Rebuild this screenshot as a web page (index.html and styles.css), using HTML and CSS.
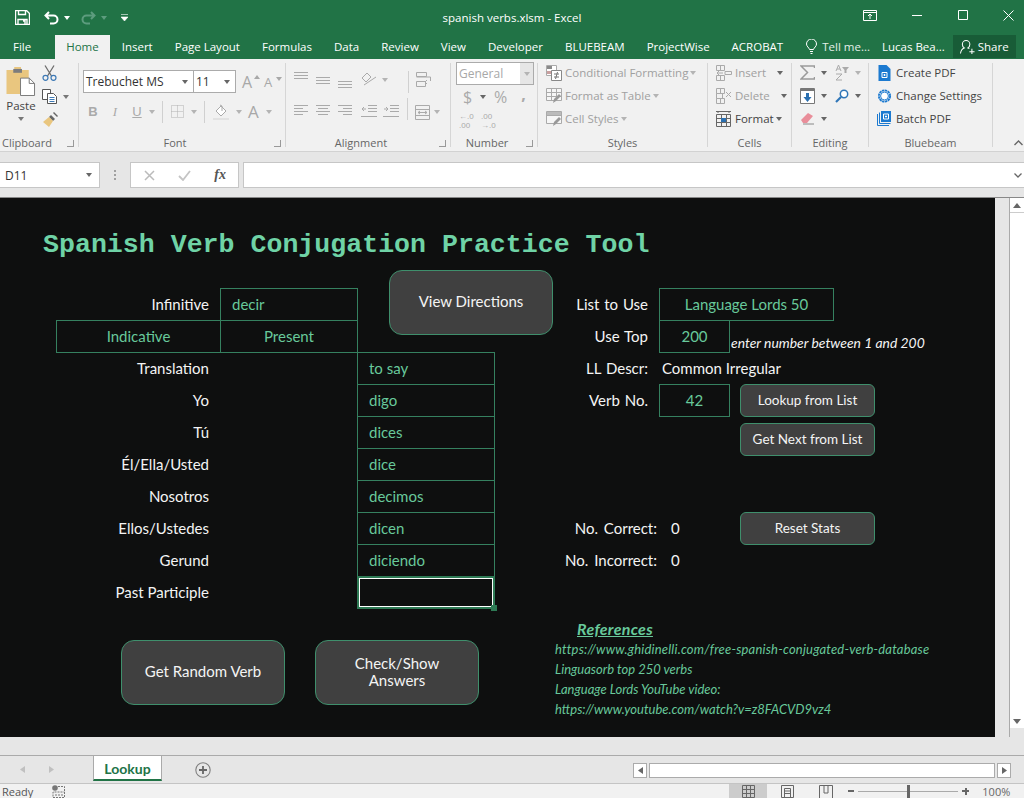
FILE: index.html
```html
<!DOCTYPE html>
<html>
<head>
<meta charset="utf-8">
<title>spanish verbs.xlsm - Excel</title>
<link rel="stylesheet" href="styles.css">
</head>
<body>

<!-- title bar -->
<div class="titlebar">
  <div class="qat">
    <svg class="q-save" width="15" height="15" viewBox="0 0 15 15"><path d="M.5.500h11l3 3v11H.500z M3.500.5v4h7v-4 M3 14.500v-5h9v5 M8 11h2v3" fill="none" stroke="#fff" stroke-width="1.400"/></svg>
    <svg class="q-undo" width="15" height="14" viewBox="0 0 15 14"><path d="M5 1L1.500 4.500 5 8 M2 4.500h7.500a4 4 0 0 1 0 8H6" fill="none" stroke="#fff" stroke-width="2"/></svg>
    <span class="caret white"></span>
    <svg class="q-redo" width="15" height="14" viewBox="0 0 15 14"><path d="M10 1l3.500 3.500L10 8 M13 4.500H5.500a4 4 0 0 0 0 8H9" fill="none" stroke="#5d9c7e" stroke-width="2"/></svg>
    <span class="caret dim"></span>
    <svg class="q-more" width="7" height="8" viewBox="0 0 7 8"><path d="M0 .5h7M0 3h7l-3.500 4z" fill="#fff" stroke="#fff" stroke-width=".6"/></svg>
  </div>
  <div class="doc-title">spanish verbs.xlsm - Excel</div>
  <div class="winbtns">
    <svg width="14" height="11" viewBox="0 0 14 11"><path d="M.5.500h13v10H.500z M.5 2.500h13 M7 9V4 M5 6l2-2 2 2" fill="none" stroke="#fff"/></svg>
    <svg class="w-min" width="10" height="1" viewBox="0 0 10 1"><path d="M0 .5h10" stroke="#fff"/></svg>
    <svg class="w-max" width="10" height="10" viewBox="0 0 10 10"><path d="M.5.500h9v9h-9z" fill="none" stroke="#fff"/></svg>
    <svg class="w-close" width="11" height="11" viewBox="0 0 11 11"><path d="M.5.500l10 10M10.500.500l-10 10" stroke="#fff"/></svg>
  </div>
</div>

<!-- ribbon tabs -->
<div class="tabs">
  <span class="tab tab-file">File</span>
  <span class="tab tab-on">Home</span>
  <span class="tab">Insert</span>
  <span class="tab">Page Layout</span>
  <span class="tab">Formulas</span>
  <span class="tab">Data</span>
  <span class="tab">Review</span>
  <span class="tab">View</span>
  <span class="tab">Developer</span>
  <span class="tab">BLUEBEAM</span>
  <span class="tab">ProjectWise</span>
  <span class="tab">ACROBAT</span>
  <svg class="bulb" width="11" height="15" viewBox="0 0 11 15"><path d="M3.500 10.500C3 8.500.5 7.500.5 5a5 5 0 0 1 10 0c0 2.500-2.500 3.500-3 5.500z M4 12.500h3 M4.500 14.500h2" fill="none" stroke="#fff"/></svg>
  <span class="tab tab-tell">Tell me...</span>
  <span class="tab tab-user">Lucas Bea...</span>
  <span class="share">
    <svg width="15" height="15" viewBox="0 0 16 16"><path d="M.5 15.500c.5-4 2.500-5.500 4-6-1.500-1-2-2.500-2-4a4 4 0 0 1 8 0c0 1.500-.5 3-2 4 .5.200 1 .4 1.500.8 M10 13.500h5.500 M12.700 10.500v5.500" fill="none" stroke="#fff" stroke-width="1.100"/></svg>
    Share
  </span>
</div>

<!-- ribbon -->
<div class="ribbon">
  <div class="group g-clip">
    <div class="body clip-body">
      <div class="paste">
        <svg width="30" height="29" viewBox="0 0 30 30"><path d="M0 3h8V0h7v3h8v25H0z" fill="#e9c67f"/><path d="M7 2h9v4H7z" fill="#7c7c7c"/><path d="M14.500 11.500h9l5.500 5.500v12.500H14.500z" fill="#fff" stroke="#777"/><path d="M23.500 11.500v5.500H29" fill="none" stroke="#777"/></svg>
        <span class="paste-txt">Paste</span>
        <span class="caret"></span>
      </div>
      <div class="clip-tools">
        <svg width="15" height="16" viewBox="0 0 15 16"><path d="M3 .5l6.500 10.500M12 .5L5.500 11" stroke="#6d6d6d" stroke-width="1.300" fill="none"/><circle cx="3.500" cy="12.800" r="2.500" fill="none" stroke="#3d79b5" stroke-width="1.200"/><circle cx="11.500" cy="12.800" r="2.500" fill="none" stroke="#3d79b5" stroke-width="1.200"/></svg>
        <span class="tool-line"><svg width="16" height="15" viewBox="0 0 16 15"><path d="M.5.500h8v10h-8z" fill="#fff" stroke="#555"/><path d="M5.500 4.500h6l3 3v7h-9z" fill="#fff" stroke="#555"/><path d="M7.500 8.500h5M7.500 10.500h5M7.500 12.500h5" stroke="#3d79b5"/></svg><span class="caret"></span></span>
        <svg width="16" height="15" viewBox="0 0 16 15"><path d="M9 3l4 4-2 2-4-4z" fill="#666"/><path d="M11 1l1-1 4 4-1 1z" fill="#666"/><path d="M7 5l4 4-4 6-6-5z" fill="#e9c67f"/></svg>
      </div>
    </div>
    <div class="name">Clipboard<i class="launcher"></i></div>
  </div>

  <div class="group g-font">
    <div class="body font-body">
      <div class="font-row1">
        <span class="combo combo-font">Trebuchet MS<span class="caret dark"></span></span>
        <span class="combo combo-size">11<span class="caret dark"></span></span>
        <span class="grow-a">A<i class="up"></i></span>
        <span class="grow-a small-a">A<i class="down"></i></span>
      </div>
      <div class="font-row2">
        <b class="fmt f-b">B</b><i class="fmt f-i">I</i><u class="fmt f-u">U</u><span class="caret dis"></span>
        <span class="vsep"></span>
        <svg width="13" height="13" viewBox="0 0 13 13"><path d="M.5.500h12v12H.500z M6.500.5v12 M.5 6.500h12" fill="none" stroke="#b0b0b0" stroke-dasharray="1 1"/></svg><span class="caret dis"></span>
        <span class="vsep"></span>
        <svg width="16" height="16" viewBox="0 0 16 16"><path d="M3 7l5-5 5 5-5 5z" fill="#fff" stroke="#aaa"/><path d="M7 1l2 1 0 5" fill="none" stroke="#aaa"/><path d="M0 14h16v2H0z" fill="#e2e2e2"/></svg><span class="caret dis"></span>
        <span class="color-a">A</span><span class="caret dis"></span>
      </div>
    </div>
    <div class="name pad-launch">Font<i class="launcher"></i></div>
  </div>

  <div class="group g-align">
    <div class="body align-body">
      <div class="align-row">
        <svg width="14" height="8" viewBox="0 0 14 8"><path d="M0 .5h14M0 3.500h14M0 6.500h14" stroke="#aaa"/></svg>
        <svg class="a-mid" width="14" height="8" viewBox="0 0 14 8"><path d="M0 .5h14M0 3.500h14M0 6.500h14" stroke="#aaa"/></svg>
        <svg class="a-bot" width="14" height="8" viewBox="0 0 14 8"><path d="M0 .5h14M0 3.500h14M0 6.500h14" stroke="#aaa"/></svg>
        <svg class="a-ori" width="16" height="14" viewBox="0 0 16 14"><path d="M1 6l5-5 4 4-5 5z M3 13l12-8" fill="none" stroke="#aaa"/></svg><span class="caret dis"></span>
        <span class="vsep vsep-a"></span>
        <svg width="16" height="15" viewBox="0 0 16 15"><path d="M.5.500h10v4H.500z M.5 9.500h9v5h-9z M.5 5h14v4" fill="none" stroke="#aaa"/><path d="M11 12l-2-2 2-2" fill="none" stroke="#aaa"/></svg>
      </div>
      <div class="align-row align-row2">
        <svg width="14" height="10" viewBox="0 0 14 10"><path d="M0 .5h14M0 3.500h9M0 6.500h14M0 9.500h9" stroke="#aaa"/></svg>
        <svg class="a-mid2" width="14" height="10" viewBox="0 0 14 10"><path d="M0 .5h14M2 3.500h10M0 6.500h14M2 9.500h10" stroke="#aaa"/></svg>
        <svg class="a-mid2" width="14" height="10" viewBox="0 0 14 10"><path d="M0 .5h14M5 3.500h9M0 6.500h14M5 9.500h9" stroke="#aaa"/></svg>
        <svg class="a-ind" width="16" height="12" viewBox="0 0 16 12"><path d="M7 .5h9M7 3.500h9M7 6.500h9M0 11.500h16M5 4H1M3 2L1 4l2 2" fill="none" stroke="#aaa"/></svg>
        <svg class="a-ind2" width="16" height="12" viewBox="0 0 16 12"><path d="M7 .5h9M7 3.500h9M7 6.500h9M0 11.500h16M1 4h4M3 2l2 2-2 2" fill="none" stroke="#aaa"/></svg>
        <span class="vsep vsep-b"></span>
        <svg width="15" height="15" viewBox="0 0 15 15"><path d="M.5.500h14v14H.500z M.5 4.500h14 M.5 10.500h14 M3 7.500h9M5 6L3 7.500 5 9M10 6l2 1.500L10 9" fill="none" stroke="#aaa"/></svg><span class="caret dis"></span>
      </div>
    </div>
    <div class="name pad-launch">Alignment<i class="launcher"></i></div>
  </div>

  <div class="group g-num">
    <div class="body num-body">
      <span class="combo combo-num">General<span class="combo-btn"><span class="caret dis"></span></span></span>
      <div class="num-row">
        <span class="n-dollar">$</span><span class="caret dark"></span><span class="n-pct">%</span><span class="n-comma">,</span>
      </div>
      <div class="num-row3">
        <span class="dec">&#8592;.0<br>.00</span><span class="dec">.00<br>&#8594;.0</span>
      </div>
    </div>
    <div class="name pad-launch">Number<i class="launcher"></i></div>
  </div>

  <div class="group g-styles">
    <div class="body list-body">
      <div class="item dis-txt">
        <svg width="16" height="16" viewBox="0 0 16 16"><path d="M.5.500h10v10H.500z" fill="#fff" stroke="#aaa"/><path d="M1 1h5v3H1z" fill="#8a8a8a"/><path d="M1 6h5v3H1z" fill="#c9a0a0"/><path d="M5.500 5.500h10v10h-10z" fill="#fff" stroke="#888"/><path d="M8 9h5M8 12h5M11.500 7l-2 7" stroke="#777" fill="none"/></svg>
        Conditional Formatting<span class="caret dis"></span>
      </div>
      <div class="item dis-txt">
        <svg width="16" height="16" viewBox="0 0 16 16"><path d="M.5.500h15v12H.500z M5.500.5v12 M10.500.5v12 M.5 4.500h15 M.5 8.500h15" fill="#f6f6f6" stroke="#aaa"/><path d="M7 15l1-4 5-5 2 2-5 5z" fill="#999"/></svg>
        Format as Table<span class="caret dis"></span>
      </div>
      <div class="item dis-txt">
        <svg width="16" height="16" viewBox="0 0 16 16"><path d="M.5.500h15v12H.500z M.5 4.500h15" fill="#f6f6f6" stroke="#aaa"/><path d="M1 1h14v3H1z" fill="#bbb"/><path d="M7 15l1-4 5-5 2 2-5 5z" fill="#999"/></svg>
        Cell Styles<span class="caret dis"></span>
      </div>
    </div>
    <div class="name">Styles</div>
  </div>

  <div class="group g-cells">
    <div class="body list-body">
      <div class="item dis-txt">
        <svg width="16" height="16" viewBox="0 0 16 16"><path d="M.5 10.500h8v5h-8z M4.500 10.500v5 M.5.500h8v5h-8z M4.500.5v5 M9 6.500h6.500v3H9z M1 8h6M3 6l-2 2 2 2" fill="none" stroke="#aaa"/></svg>
        Insert<span class="caret dark far"></span>
      </div>
      <div class="item dis-txt">
        <svg width="16" height="16" viewBox="0 0 16 16"><path d="M.5 10.500h8v5h-8z M4.500 10.500v5 M.5.500h8v5h-8z M4.500.5v5 M.5 5.500h6v5h-6z M10 4l5 5M15 4l-5 5" fill="none" stroke="#aaa"/></svg>
        Delete<span class="caret dark far"></span>
      </div>
      <div class="item">
        <svg width="16" height="16" viewBox="0 0 16 16"><path d="M.5 3.500h14v12H.500z M.5 7.500h14 M.5 11.500h14 M5.500 3.500v12 M10.500 3.500v12 M0 .5h15 M2 0v2 M13 0v2" fill="none" stroke="#666"/><path d="M5 7h5v4H5z" fill="#2a6fb0"/></svg>
        Format<span class="caret dark"></span>
      </div>
    </div>
    <div class="name">Cells</div>
  </div>

  <div class="group g-edit">
    <div class="body edit-body">
      <div class="edit-row">
        <svg width="15" height="15" viewBox="0 0 15 15"><path d="M14.500 3V1H1l6.500 6.500L1 14h13.500v-2" fill="none" stroke="#9a9a9a" stroke-width="1.500"/></svg><span class="caret dark"></span>
        <svg class="e-2" width="14" height="16" viewBox="0 0 14 16"><path d="M7 15H1l6-6H1M1 6l2.500-6L6 6M2 4h3" fill="none" stroke="#aaa"/><path d="M7 2h7l-2.500 3v3h-2V5z" fill="#aaa"/></svg><span class="caret dis"></span>
      </div>
      <div class="edit-row">
        <svg width="15" height="16" viewBox="0 0 15 16"><path d="M.5.500h14v15H.500z" fill="#fff" stroke="#777"/><path d="M1 1h13v2H1z" fill="#777"/><path d="M6 5h3v4h2.500l-4 5-4-5H6z" fill="#2a6fb0"/></svg><span class="caret dark"></span>
        <svg class="e-2" width="14" height="14" viewBox="0 0 14 14"><circle cx="9" cy="5" r="3.700" fill="#fff" stroke="#2f76b8" stroke-width="1.500"/><path d="M1 13l5-5" stroke="#2f76b8" stroke-width="2.200"/></svg><span class="caret dark"></span>
      </div>
      <div class="edit-row">
        <svg width="15" height="14" viewBox="0 0 15 14"><path d="M1 8l7-7 5 3-6 7H3z" fill="#e98e9a"/><path d="M3 12h11" stroke="#888"/></svg><span class="caret dark"></span>
      </div>
    </div>
    <div class="name">Editing</div>
  </div>

  <div class="group g-bb">
    <div class="body list-body">
      <div class="item bb">
        <svg width="15" height="16" viewBox="0 0 14 16"><path d="M1 0h8l4 4v12H1z" fill="#1c7ad0"/><path d="M4.500 7.500h5v5h-5z M6.500 9.500h1v1h-1z" fill="none" stroke="#fff"/></svg>
        Create PDF
      </div>
      <div class="item bb">
        <svg width="15" height="16" viewBox="0 0 16 16"><circle cx="8" cy="8" r="6" fill="none" stroke="#1c7ad0" stroke-width="2" stroke-dasharray="2.500 .6"/><circle cx="8" cy="8" r="4.200" fill="#fff" stroke="#1c7ad0"/></svg>
        Change Settings
      </div>
      <div class="item bb">
        <svg width="15" height="15" viewBox="0 0 15 15"><path d="M.5 3v11.500H12M2.500 1.500v11h11" fill="none" stroke="#1c7ad0"/><path d="M4 0h10v11H4z" fill="#1c7ad0"/><path d="M6.500 3h5v5h-5z M8.500 5h1v1h-1z" fill="none" stroke="#fff"/></svg>
        Batch PDF
      </div>
    </div>
    <div class="name">Bluebeam</div>
  </div>

  <svg class="collapse" width="9" height="6" viewBox="0 0 9 6"><path d="M.5 5l4-4 4 4" fill="none" stroke="#666" stroke-width="1.400"/></svg>
</div>

<!-- formula bar -->
<div class="strip-a"></div>
<div class="formula">
  <div class="namebox">D11<span class="caret dark"></span></div>
  <div class="dots"><span></span></div>
  <div class="fx-box">
    <svg width="11" height="11" viewBox="0 0 11 11"><path d="M1 1l9 9M10 1l-9 9" stroke="#bbb" stroke-width="1.500"/></svg>
    <svg width="13" height="11" viewBox="0 0 13 11"><path d="M1 6l4 4 7-9" fill="none" stroke="#c4c4c4" stroke-width="1.800"/></svg>
    <i class="fx">fx</i>
  </div>
  <div class="input-box">
    <svg width="8" height="5" viewBox="0 0 8 5"><path d="M.5.500L4 4 7.500.5" fill="none" stroke="#666" stroke-width="1.300"/></svg>
  </div>
</div>
<div class="strip-b"></div>

<!-- worksheet -->
<div class="work">
  <div class="sheet">
    <h1 class="sheet-title">Spanish Verb Conjugation Practice Tool</h1>

    <div class="lbl r2 c2">Infinitive</div>
    <div class="box r2 c3 left">decir</div>
    <div class="lblr r2 c5">List to Use</div>
    <div class="box r2 c6-7 mid">Language Lords 50</div>

    <div class="box r3 c2 mid">Indicative</div>
    <div class="box r3 c3 mid">Present</div>
    <div class="lblr r3 c5">Use Top</div>
    <div class="box r3 c6 mid">200</div>
    <div class="note r3 c7-8">enter number between 1 and 200</div>

    <div class="lbl r4 c2">Translation</div>
    <div class="box r4 c4 left">to say</div>
    <div class="lblr r4 c5">LL Descr:</div>
    <div class="plain r4 c6-8">Common Irregular</div>

    <div class="lbl r5 c2">Yo</div>
    <div class="box r5 c4 left">digo</div>
    <div class="lblr r5 c5">Verb No.</div>
    <div class="box r5 c6 mid">42</div>

    <div class="lbl r6 c2">Tú</div>
    <div class="box r6 c4 left">dices</div>

    <div class="lbl r7 c2">Él/Ella/Usted</div>
    <div class="box r7 c4 left">dice</div>

    <div class="lbl r8 c2">Nosotros</div>
    <div class="box r8 c4 left">decimos</div>

    <div class="lbl r9 c2">Ellos/Ustedes</div>
    <div class="box r9 c4 left">dicen</div>
    <div class="lblc r9 c5">No. Correct:</div>
    <div class="val r9 c6">0</div>

    <div class="lbl r10 c2">Gerund</div>
    <div class="box r10 c4 left">diciendo</div>
    <div class="lblc r10 c5">No. Incorrect:</div>
    <div class="val r10 c6">0</div>

    <div class="lbl r11 c2">Past Participle</div>
    <div class="active r11 c4"><span class="handle"></span></div>

    <div class="big-btns">
      <div class="btn btn-big">Get Random Verb</div>
      <div class="btn btn-big">Check/Show<br>Answers</div>
    </div>

    <div class="refs">
      <div class="refs-head">References</div>
      <div class="ref-long">https://www.ghidinelli.com/free-spanish-conjugated-verb-database</div>
      <div>Linguasorb top 250 verbs</div>
      <div>Language Lords YouTube video:</div>
      <div>https://www.youtube.com/watch?v=z8FACVD9vz4</div>
    </div>

    <!-- floating shapes -->
    <div class="btn shape-view">View Directions</div>
    <div class="btn btn-small shape-lookup">Lookup from List</div>
    <div class="btn btn-small shape-next">Get Next from List</div>
    <div class="btn btn-small shape-reset">Reset Stats</div>
  </div>
  <div class="vgap"></div>
  <div class="vscroll">
    <span class="v-up"><svg width="8" height="5" viewBox="0 0 8 5"><path d="M0 5l4-5 4 5z" fill="#666"/></svg></span>
    <span class="v-thumb"></span>
    <span class="v-down"><svg width="8" height="5" viewBox="0 0 8 5"><path d="M0 0l4 5 4-5z" fill="#666"/></svg></span>
  </div>
</div>
<div class="strip-c"></div>

<!-- sheet tabs -->
<div class="sheetbar">
  <svg class="nav-l" width="5" height="7" viewBox="0 0 5 7"><path d="M5 0L0 3.500 5 7z" fill="#c0c0c0"/></svg>
  <svg class="nav-r" width="5" height="7" viewBox="0 0 5 7"><path d="M0 0l5 3.500L0 7z" fill="#c0c0c0"/></svg>
  <div class="sheet-tab">Lookup</div>
  <svg class="add" width="16" height="16" viewBox="0 0 16 16"><circle cx="8" cy="8" r="7.200" fill="none" stroke="#808080" stroke-width="1.100"/><path d="M8 4v8M4 8h8" stroke="#666" stroke-width="1.800"/></svg>
  <div class="hscroll">
    <span class="h-btn"><svg width="5" height="7" viewBox="0 0 5 7"><path d="M5 0L0 3.500 5 7z" fill="#666"/></svg></span>
    <span class="h-thumb"></span>
    <span class="h-btn"><svg width="5" height="7" viewBox="0 0 5 7"><path d="M0 0l5 3.500L0 7z" fill="#666"/></svg></span>
  </div>
</div>

<!-- status bar -->
<div class="status">
  <span class="ready">Ready</span>
  <svg class="macro" width="13" height="13" viewBox="0 0 13 13"><circle cx="3" cy="3" r="2.800" fill="#777"/><path d="M6 1.500h6.500v11H1V7h11.500 M3 10h8" fill="none" stroke="#777" stroke-dasharray="2 1"/></svg>
  <span class="view-btn view-on"><svg width="13" height="13" viewBox="0 0 13 13"><path d="M.5.500h12v12H.500z M4.500.5v12 M8.500.5v12 M.5 4.500h12 M.5 8.500h12" fill="none" stroke="#666"/></svg></span>
  <span class="view-btn"><svg width="13" height="13" viewBox="0 0 13 13"><path d="M.5.500h12v12H.500z M3.500 3.500h6v10h-6z M3.500 6h6 M3.500 8.500h6" fill="none" stroke="#666"/></svg></span>
  <span class="view-btn"><svg width="14" height="13" viewBox="0 0 14 13"><path d="M.5 13V.5h13V13 M5 0v8h4V0" fill="none" stroke="#666"/></svg></span>
  <div class="zoom">
    <span class="z-minus"></span>
    <span class="z-track"><span class="z-thumb"></span></span>
    <span class="z-plus"></span>
    <span class="z-pct">100%</span>
  </div>
</div>

</body>
</html>
```

FILE: styles.css
```css
* { box-sizing: border-box; }
html, body { margin: 0; height: 798px; overflow: hidden; }
body { width: 1024px; font-family: "Open Sans", "Noto Sans", sans-serif; font-size: 12px; color: #444; background: #e6e6e6; }

.caret { display: inline-block; width: 0; height: 0; border-left: 3.5px solid transparent; border-right: 3.5px solid transparent; border-top: 4px solid #777; }
.caret.white { border-top-color: #fff; }
.caret.dim { border-top-color: #5d9c7e; }
.caret.dark { border-top-color: #666; }
.caret.dis { border-top-color: #b4b4b4; }

/* title bar */
.titlebar { height: 35px; background: #217346; display: grid; grid-template-columns: 1fr auto 1fr; align-items: center; color: #fff; }
.qat { display: flex; align-items: center; padding-left: 15px; }
.q-undo { margin-left: 14px; }
.qat .caret { margin-left: 5px; }
.q-redo { margin-left: 11px; }
.q-more { margin-left: 14px; }
.doc-title { font-size: 11.5px; }
.winbtns { display: flex; align-items: center; justify-content: flex-end; padding-right: 10px; padding-bottom: 5px; }
.w-min { margin-left: 35px; }
.w-max { margin-left: 36px; }
.w-close { margin-left: 35px; }

/* tabs */
.tabs { height: 24px; background: #217346; display: flex; align-items: stretch; color: #fff; position: relative; }
.tab { padding-top: 4px; margin-left: 22px; white-space: nowrap; font-size: 11.5px; }
.tab-file { margin-left: 13px; margin-right: 2px; }
.tab-on { background: #f1f1f1; color: #217346; margin-left: 22px; margin-right: -10px; padding: 4px 11px 0; }
.bulb { margin: 4px 0 0 23px; }
.tab-tell { margin-left: 5px; color: #e4efe9; }
.tab-user { margin-left: 12px; }
.share { margin-left: 8px; width: 63px; height: 23px; background: #185c37; display: flex; align-items: center; gap: 3px; padding-left: 7px; font-size: 11.5px; }

/* ribbon */
.ribbon { height: 93px; background: #f1f1f1; display: flex; position: relative; padding-top: 4px; border-bottom: 1px solid #d2d2d2; }
.group { height: 84px; display: flex; flex-direction: column; border-right: 1px solid #d6d6d6; position: relative; }
.g-clip { width: 79px; }
.g-font { width: 207px; }
.g-align { width: 165px; }
.g-num { width: 87px; }
.g-styles { width: 170px; }
.g-cells { width: 84px; }
.g-edit { width: 77px; }
.g-bb { width: 124px; }
.body { flex: none; height: 73px; display: flex; }
.name { height: 14px; text-align: center; font-size: 11px; line-height: 14px; color: #666; position: relative; }
.pad-launch { padding-right: 14px; }
.g-clip .name { text-align: left; padding-left: 2px; }
.launcher { position: absolute; right: 4px; top: 4px; width: 7px; height: 7px; border-left: 1px solid #999; border-top: 1px solid #999; transform: rotate(180deg); }
.collapse { position: absolute; top: 81px; right: 1px; }

.clip-body { padding: 3px 0 0 6px; }
.paste { width: 30px; display: flex; flex-direction: column; align-items: center; font-size: 11.5px; color: #444; }
.paste svg { margin-top: 1px; }
.paste-txt { margin-top: 2px; line-height: 15px; }
.paste .caret { margin-top: 4px; }
.clip-tools { display: flex; flex-direction: column; gap: 8px; margin: -1px 0 0 6px; }
.tool-line { display: flex; align-items: center; gap: 5px; }

.font-body { flex-direction: column; padding: 7px 0 0 4px; }
.font-row1 { display: flex; align-items: center; height: 23px; }
.combo { background: #fff; border: 1px solid #ababab; display: flex; align-items: center; justify-content: space-between; color: #333; font-size: 12px; font-family: "Open Sans", sans-serif; padding: 0 5px 0 2px; height: 23px; }
.combo-font { width: 111px; }
.combo-size { width: 43px; margin-left: -1px; }
.grow-a { margin-left: 6px; color: #a8a8a8; font-size: 16px; position: relative; width: 13px; }
.small-a { margin-left: 9px; font-size: 13px; }
.grow-a i { position: absolute; right: -5px; top: 4px; width: 0; height: 0; border-left: 3px solid transparent; border-right: 3px solid transparent; }
.grow-a .up { border-bottom: 4px solid #a8a8a8; }
.grow-a .down { border-top: 4px solid #a8a8a8; }
.font-row2 { display: flex; align-items: center; height: 23px; margin-top: 7px; padding-left: 5px; color: #aaa; }
.fmt { font-family: "Liberation Sans", sans-serif; font-size: 13px; width: 10px; text-align: center; }
.f-i { margin-left: 12px; font-family: "Liberation Serif", serif; }
.f-u { margin-left: 12px; }
.font-row2 .caret { margin-left: 7px; }
.vsep { width: 1px; height: 22px; background: #d0d0d0; margin: 0 8px 0 7px; }
.color-a { margin-left: 6px; font-size: 17px; color: #a8a8a8; }

.align-body { flex-direction: column; padding: 9px 0 0 8px; }
.align-row { display: flex; align-items: flex-start; height: 22px; }
.a-mid { margin: 5px 0 0 8px; }
.a-bot { margin: 9px 0 0 8px; }
.a-ori { margin: 0 0 0 9px; }
.align-row .caret { margin: 6px 0 0 5px; }
.vsep-a { margin: -1px 7px 0 20px; }
.align-row2 { margin-top: 9px; }
.a-mid2 { margin-left: 8px; }
.a-ind { margin-left: 9px; }
.a-ind2 { margin-left: 6px; }
.vsep-b { margin: -5px 7px 0 8px; }
.align-row2 > svg { margin-top: 2px; }
.align-row2 .caret { margin: 7px 0 0 4px; }

.num-body { flex-direction: column; padding: 0 0 0 5px; margin: -1px 0 1px; }
.combo-num { width: 78px; height: 23px; flex: none; color: #a8a8a8; padding: 0 0 0 2px; font-size: 12px; }
.combo-btn { width: 13px; height: 21px; background: #e6e6e6; display: flex; align-items: center; justify-content: center; }
.num-row { display: flex; align-items: center; height: 24px; color: #aaa; padding-left: 7px; }
.n-dollar { font-size: 16px; width: 10px; }
.num-row .caret { margin-left: 7px; }
.n-pct { font-size: 16px; margin-left: 8px; }
.n-comma { font-size: 16px; margin-left: 14px; font-weight: 700; margin-top: -6px; }
.num-row3 { display: flex; gap: 8px; padding-left: 3px; margin-top: 3px; }
.dec { font-family: "Liberation Sans", sans-serif; font-size: 8px; line-height: 9px; color: #aaa; width: 14px; }

.list-body { flex-direction: column; margin: -2px 0 2px; }
.item { height: 23px; display: flex; align-items: center; white-space: nowrap; padding-left: 8px; gap: 3px; font-size: 11.500px; color: #444; }
.item .caret { margin-left: -1px; }
.item .far { margin-left: 8px; }
.dis-txt { color: #a0a0a0; }
.bb { gap: 4px; }

.edit-body { flex-direction: column; padding-left: 8px; margin: -2px 0 2px; }
.edit-row { height: 23px; display: flex; align-items: center; }
.edit-row .caret { margin-left: 6px; }
.e-2 { margin-left: 8px; }

/* formula bar */
.strip-a { height: 10px; background: #e6e6e6; }
.formula { height: 26px; background: #e6e6e6; display: flex; }
.namebox { width: 100px; background: #fff; border: 1px solid #c6c6c6; border-left: 0; font-size: 12px; display: flex; align-items: center; justify-content: space-between; padding: 0 7px 0 5px; color: #333; }
.dots { width: 30px; display: flex; align-items: center; padding-left: 14px; }
.dots span { width: 2px; height: 10px; background: repeating-linear-gradient(#a0a0a0 0 2px, transparent 2px 4px); }
.fx-box { width: 109px; background: #fff; border: 1px solid #c6c6c6; display: flex; align-items: center; justify-content: space-between; padding: 0 12px 0 13px; }
.fx { font-family: "Liberation Serif", serif; font-size: 14px; font-weight: 700; color: #555; }
.input-box { width: 781px; margin-left: 4px; background: #fff; border: 1px solid #c6c6c6; border-right: 0; display: flex; align-items: center; justify-content: flex-end; padding-right: 2px; }
.strip-b { height: 10px; background: #e6e6e6; border-bottom: 1px solid #888; }

/* worksheet */
.work { height: 539px; display: flex; }
.sheet {
  width: 995px; background: #0e0f0f; position: relative;
  display: grid;
  grid-template-columns: 56px 164px 137px 137px 165px 70px 104px 162px;
  grid-template-rows: 90px repeat(10, 32px) 129px;
  font-family: "Lato", "Open Sans", sans-serif; font-size: 15px; color: #f4f4f4;
}
.sheet-title { grid-column: 1 / -1; grid-row: 1; margin: 0; padding: 32px 0 0 43px; font: 700 26.6px/30px "Liberation Mono", monospace; color: #6fd3a6; }

.r2 { grid-row: 2; } .r3 { grid-row: 3; } .r4 { grid-row: 4; } .r5 { grid-row: 5; }
.r6 { grid-row: 6; } .r7 { grid-row: 7; } .r8 { grid-row: 8; } .r9 { grid-row: 9; }
.r10 { grid-row: 10; } .r11 { grid-row: 11; }
.c2 { grid-column: 2; } .c3 { grid-column: 3; } .c4 { grid-column: 4; } .c5 { grid-column: 5; }
.c6 { grid-column: 6; } .c6-7 { grid-column: 6 / 8; } .c6-8 { grid-column: 6 / 9; } .c7-8 { grid-column: 7 / 9; }

.lbl, .lblr, .lblc, .box, .plain, .val, .note { display: flex; align-items: center; white-space: pre; }
.lbl { justify-content: flex-end; padding-right: 11px; }
.lblr { justify-content: flex-end; padding-right: 11px; word-spacing: 1px; }
.lblc { justify-content: flex-end; padding-right: 2px; word-spacing: 2px; }
.val { padding-left: 12px; }
.plain { padding-left: 3px; }
.note { font-style: italic; font-size: 13.9px; padding: 12px 0 0 2px; }
.box { border: 1px solid #35805f; margin: 0 -1px -1px 0; padding-bottom: 2px; color: #68c99b; }
.left { padding-left: 11px; }
.mid { justify-content: center; }
.active { border: 2px solid #2e7a55; box-shadow: inset 0 0 0 1px #fff; margin: 0 -1px -1px 0; position: relative; }
.handle { position: absolute; right: -4px; bottom: -4px; width: 6px; height: 6px; background: #2e7a55; }

.btn { background: #404040; border: 1px solid #3f8f6c; border-radius: 13px; color: #f4f4f4; display: flex; align-items: center; justify-content: center; text-align: center; line-height: 17px; padding-bottom: 2px; }
.big-btns { grid-column: 1 / 5; grid-row: 12; display: flex; gap: 30px; padding: 32px 0 0 121px; align-items: flex-start; }
.btn-big { width: 164px; height: 65px; }
.btn-small { width: 135px; height: 33px; border-radius: 6px; font-size: 13.5px; padding-bottom: 0; }
.shape-view { position: absolute; left: 389px; top: 72px; width: 164px; height: 65px; }
.shape-lookup { position: absolute; left: 740px; top: 186px; }
.shape-next { position: absolute; left: 740px; top: 225px; }
.shape-reset { position: absolute; left: 740px; top: 314px; }

.refs { grid-column: 5 / 9; grid-row: 12; padding: 11px 0 0 61px; font-style: italic; font-size: 13px; line-height: 20px; color: #68c99b; white-space: nowrap; }
.refs-head { font-size: 16px; font-weight: 700; letter-spacing: .3px; text-decoration: underline; padding-left: 22px; }
.ref-long { letter-spacing: .19px; }

.vgap { width: 15px; background: #e6e6e6; border-right: 1px solid #aaa; }
.vscroll { width: 14px; display: flex; flex-direction: column; background: #e6e6e6; }
.v-up, .v-down { height: 14px; background: #fff; display: flex; align-items: center; justify-content: center; }
.v-thumb { height: 502px; background: #fff; border-top: 1px solid #ccc; }
.strip-c { height: 19px; background: #e6e6e6; border-bottom: 1px solid #aaa; }

/* sheet tabs */
.sheetbar { height: 28px; background: #e6e6e6; display: flex; align-items: flex-start; border-bottom: 1px solid #c4c4c4; }
.nav-l { margin: 10px 0 0 20px; }
.nav-r { margin: 10px 0 0 24px; }
.sheet-tab { width: 69px; height: 25px; margin: 0 0 0 39px; padding-top: 1px; background: #fff; border: 1px solid #aaa; border-top: 0; border-bottom: 2px solid #217346; color: #217346; font-weight: 700; font-size: 14px; display: flex; align-items: center; justify-content: center; font-family: "Lato", sans-serif; }
.add { margin: 6px 0 0 33px; }
.hscroll { margin: 7px 0 0 422px; width: 378px; height: 15px; display: flex; gap: 2px; }
.h-btn { width: 14px; background: #fff; border: 1px solid #ababab; display: flex; align-items: center; justify-content: center; }
.h-thumb { flex: 1; background: #fff; border: 1px solid #ababab; }

/* status bar */
.status { height: 14px; background: #f1f1f1; display: flex; align-items: center; font-size: 11px; color: #555; }
.ready { margin-left: 2px; }
.macro { margin-left: 19px; }
.view-btn { width: 38px; height: 14px; margin-left: 1px; display: flex; justify-content: center; align-items: flex-start; padding-top: 1px; }
.view-on { background: #ccc; margin-left: 664px; }
.zoom { display: flex; align-items: center; margin-left: 3px; flex: 1; }
.z-minus { width: 6px; height: 2px; background: #666; }
.z-track { width: 100px; height: 1px; background: #aaa; margin-left: 4px; position: relative; }
.z-thumb { position: absolute; left: 49px; top: -6px; width: 3px; height: 13px; background: #666; }
.z-plus { width: 7px; height: 7px; margin-left: 4px; background: linear-gradient(#666, #666) center / 7px 2px no-repeat, linear-gradient(#666, #666) center / 2px 7px no-repeat; }
.z-pct { margin-left: 13px; color: #666; }
```
